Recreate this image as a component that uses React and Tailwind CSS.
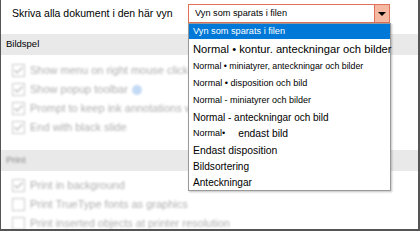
import { Check } from 'lucide-react';

const font = { fontFamily: '"Liberation Sans", Arial, sans-serif' };

const CheckRow = ({ label, checked, info }) => (
  <div className="flex items-center h-[19px] pl-[11px]">
    <div className="w-[13px] h-[13px] border border-[#aaa] bg-white flex items-center justify-center">
      {checked && <Check size={11} strokeWidth={2.5} className="text-[#888]" />}
    </div>
    <span className="ml-[5px] text-[11px] text-[#777] whitespace-nowrap">{label}</span>
    {info && <div className="ml-[4px] w-[10px] h-[10px] rounded-full bg-[#9cc2ee]" />}
  </div>
);

const SectionHead = ({ title, faded }) => (
  <div className="h-[21px] bg-[#e9e9e9] flex items-center pl-[5px]">
    <span className={`text-[9.5px] ${faded ? 'text-[#888] blur-[1px]' : 'text-black'}`}>{title}</span>
  </div>
);

const items = [
  { text: 'Vyn som sparats i filen', cls: 'text-[9.2px] h-[15px] bg-[#0078d7] text-white' },
  { text: 'Normal • kontur. anteckningar och bilder', cls: 'text-[11.2px] h-[19px] pt-[2px]' },
  { text: 'Normal • miniatyrer, anteckningar och bilder', cls: 'text-[8.8px] h-[17px]' },
  { text: 'Normal • disposition och bild', cls: 'text-[9.1px] h-[17px]' },
  { text: 'Normal - miniatyrer och bilder', cls: 'text-[9px] h-[17px]' },
  { text: 'Normal - anteckningar och bild', cls: 'text-[10px] h-[16px]' },
  { text: 'Normal•', cls: 'text-[9px] h-[17px]', extra: 'endast bild' },
  { text: 'Endast disposition', cls: 'text-[10.4px] h-[17px]' },
  { text: 'Bildsortering', cls: 'text-[10.1px] h-[16px]' },
  { text: 'Anteckningar', cls: 'text-[10.1px] h-[15px]' },
];

export default function App() {
  return (
    <div className="w-[420px] h-[231px] bg-white border-l border-r-2 border-b-2 border-[#555] relative overflow-hidden" style={font}>
      {/* top row */}
      <div className="flex items-start h-[34px] pt-[4px]">
        <span className="pl-[11px] w-[187px] text-[10.5px] leading-[19px] text-black whitespace-nowrap">Skriva alla dokument i den här vyn</span>
        <div className="flex w-[202px] h-[19px] border border-[#e0705a] bg-white">
          <span className="flex-1 pl-[6px] text-[9.2px] text-black leading-[17px]">Vyn som sparats i filen</span>
          <div className="w-[15px] bg-[#f5b9a2] border-l border-[#e0705a] flex items-center justify-center">
            <div className="w-0 h-0 border-l-[4px] border-r-[4px] border-t-[4px] border-l-transparent border-r-transparent border-t-black" />
          </div>
        </div>
      </div>

      <SectionHead title="Bildspel" />
      <div className="pt-[6px] opacity-60 blur-[1.2px]">
        <CheckRow label="Show menu on right mouse click" checked info />
        <CheckRow label="Show popup toolbar" checked info />
        <CheckRow label="Prompt to keep ink annotations when exiting" checked />
        <CheckRow label="End with black slide" checked />
      </div>
      <div className="h-[13px]" />
      <SectionHead title="Print" faded />
      <div className="pt-[5px] opacity-60 blur-[1.2px]">
        <CheckRow label="Print in background" checked />
        <CheckRow label="Print TrueType fonts as graphics" />
        <CheckRow label="Print inserted objects at printer resolution" />
      </div>

      {/* open list */}
      <div className="absolute left-[187px] top-[23px] w-[203px] bg-white border border-[#9a9a9a] shadow-[1px_1px_2px_rgba(0,0,0,0.25)]">
        {items.map((it) => (
          <div key={it.text} className={`flex items-center pl-[4px] text-black whitespace-nowrap ${it.cls}`}>
            {it.text}
            {it.extra && <span className="ml-[13px] text-[10.3px]">{it.extra}</span>}
          </div>
        ))}
      </div>
    </div>
  );
}
